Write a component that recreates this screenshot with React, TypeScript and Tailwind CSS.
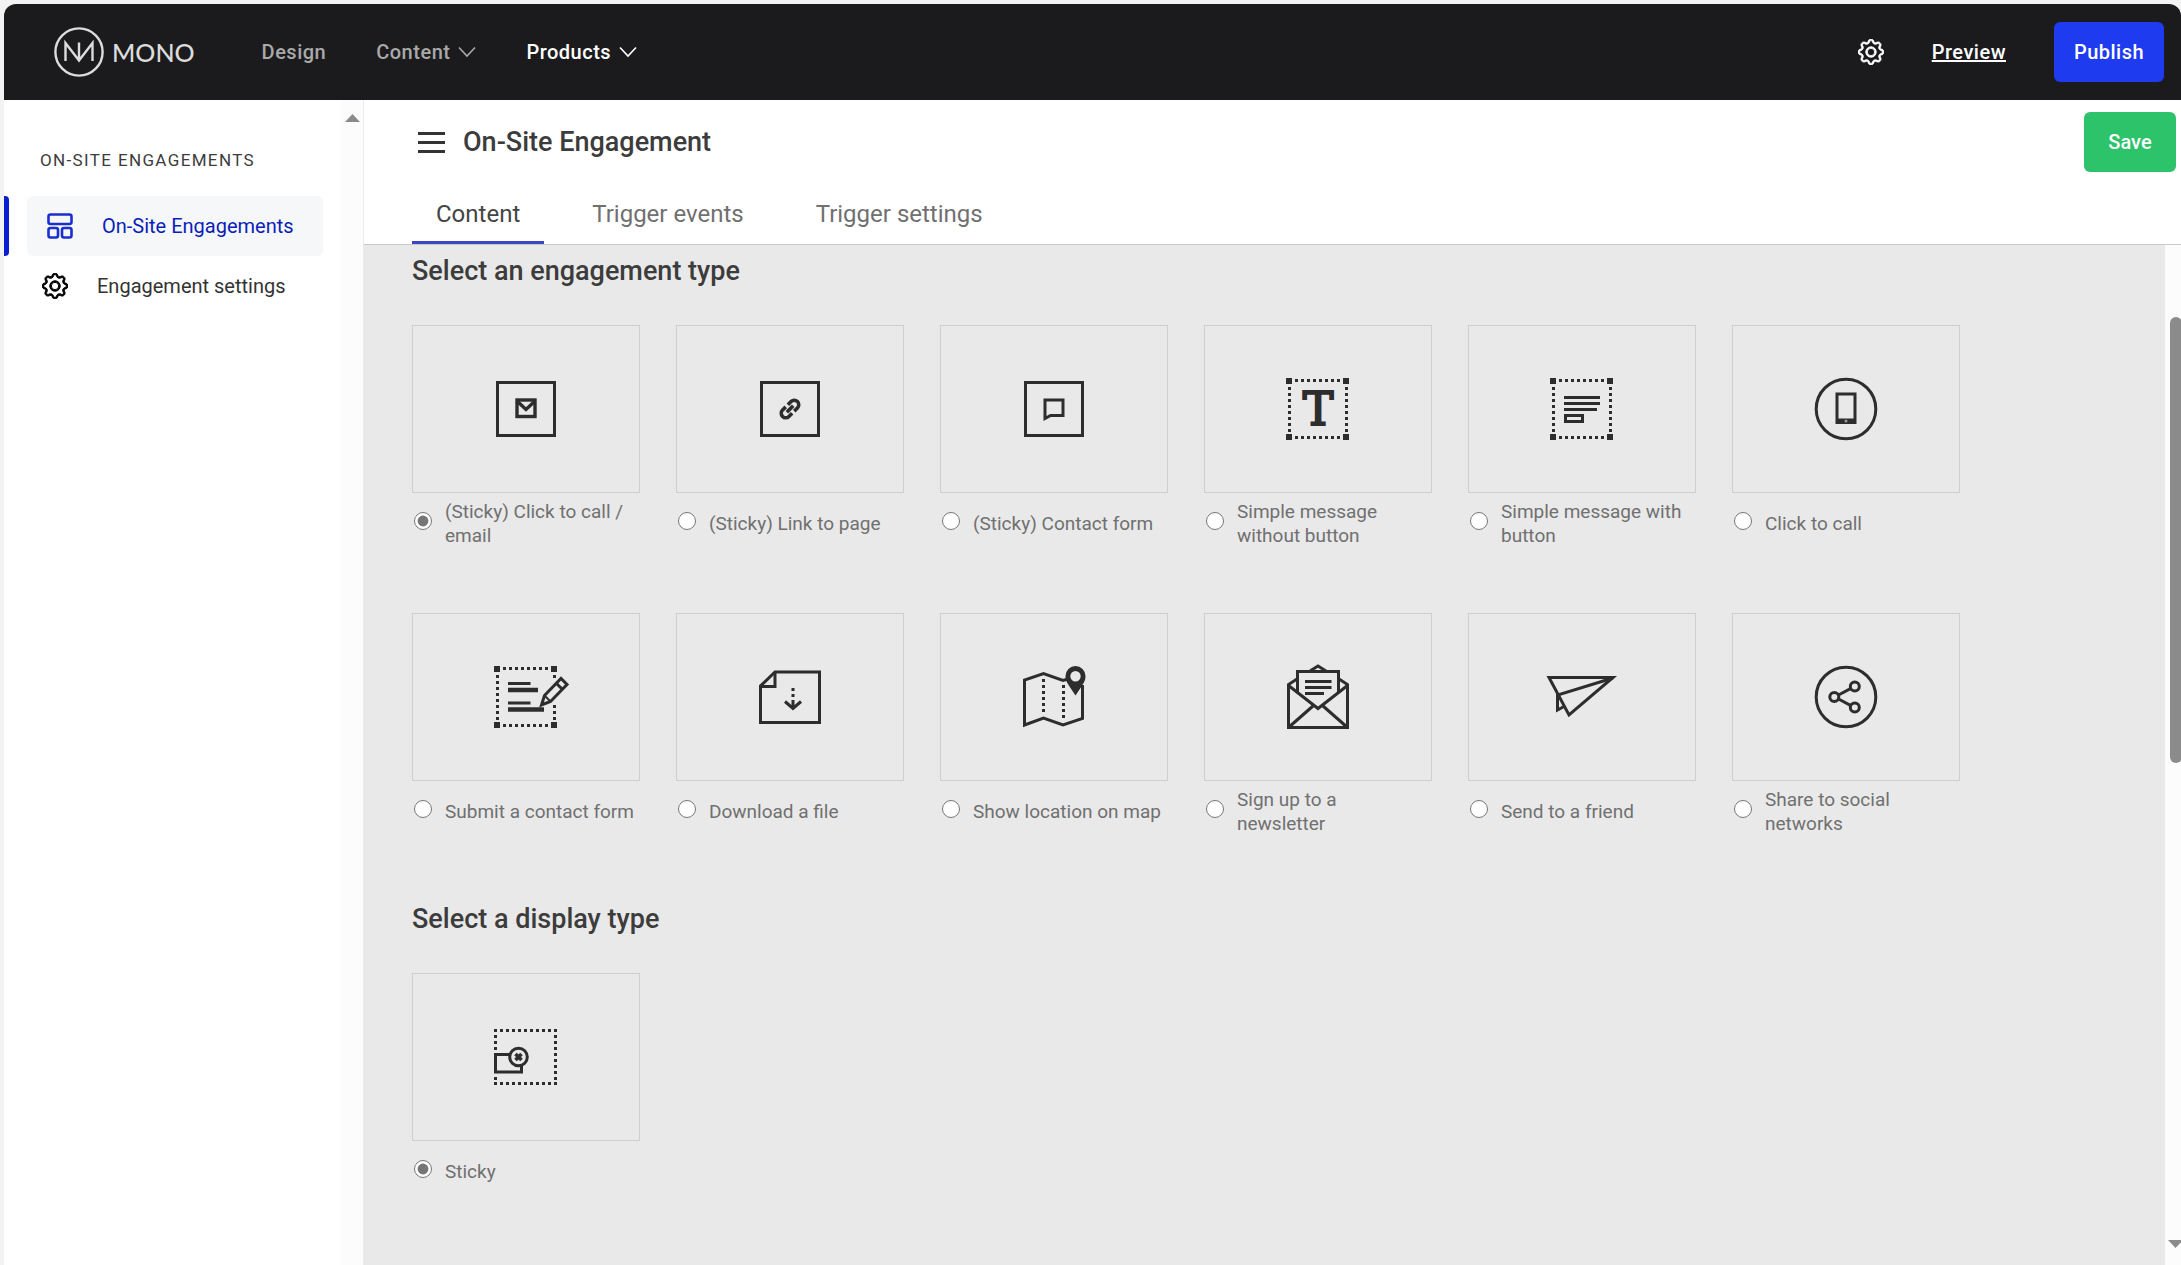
import React, { useState } from 'react';
import { BsGear } from 'react-icons/bs';

interface Option {
  id: string;
  label: string;
  icon: React.ReactNode;
}

interface OptionGroupProps {
  name: string;
  title: string;
  options: Option[];
}

const TABS = ['Content', 'Trigger events', 'Trigger settings'];

// All the card drawings share one canvas with its origin in the middle
const Drawing: React.FC<{ children: React.ReactNode }> = ({ children }) => (
  <svg
    width="96"
    height="96"
    viewBox="-48 -48 96 96"
    fill="none"
    stroke="#2d2d2d"
    strokeWidth="3"
    aria-hidden="true"
  >
    {children}
  </svg>
);

const Frame = () => <rect x="-28.5" y="-26.5" width="57" height="53" />;

const DottedFrame: React.FC<{ cut?: boolean }> = ({ cut }) => (
  <>
    <g strokeDasharray="3 3">
      <path d="M-23 -28.5H22M-23 28.5H22M-28.5 -22V23" />
      {cut ? <path d="M28.5 -22V-18M28.5 8V23" /> : <path d="M28.5 -22V23" />}
    </g>
    <path
      d="M-32 -31h6v6h-6zM25 -31h6v6h-6zM-32 25h6v6h-6zM25 25h6v6h-6z"
      fill="#2d2d2d"
      stroke="none"
    />
  </>
);

const ENGAGEMENT_TYPES: Option[] = [
  {
    id: 'sticky-call',
    label: '(Sticky) Click to call / email',
    icon: (
      <Drawing>
        <Frame />
        <rect x="-9" y="-9" width="18" height="16.5" strokeWidth="3.4" />
        <path d="M-9 -8L0 0.5L9 -8" strokeWidth="3.4" />
      </Drawing>
    ),
  },
  {
    id: 'sticky-link',
    label: '(Sticky) Link to page',
    icon: (
      <Drawing>
        <Frame />
        <g transform="rotate(-45)" strokeWidth="3.6">
          <path d="M-1.5 -4.5H-6a4.5 4.5 0 0 0 0 9H-1.5M1.5 -4.5H6a4.5 4.5 0 0 1 0 9H1.5M-4.5 0H4.5" />
        </g>
      </Drawing>
    ),
  },
  {
    id: 'sticky-form',
    label: '(Sticky) Contact form',
    icon: (
      <Drawing>
        <Frame />
        <path d="M-9 -9H9V6.5H-3.5L-9 9.5Z" />
      </Drawing>
    ),
  },
  {
    id: 'message',
    label: 'Simple message without button',
    icon: (
      <Drawing>
        <DottedFrame />
        <text
          x="0"
          y="16"
          textAnchor="middle"
          fontSize="46"
          fill="#2d2d2d"
          strokeWidth="2"
          className="font-['DejaVu_Serif',serif]"
        >
          T
        </text>
      </Drawing>
    ),
  },
  {
    id: 'message-button',
    label: 'Simple message with button',
    icon: (
      <Drawing>
        <DottedFrame />
        <path d="M-18 -11.5H18M-18 -5.5H18M-18 0.5H15" />
        <rect x="-16.5" y="6.5" width="17" height="6" />
      </Drawing>
    ),
  },
  {
    id: 'call',
    label: 'Click to call',
    icon: (
      <Drawing>
        <circle r="29.8" />
        <path
          d="M-10.5 -16.5h21V15h-21zM-7.5 -13.5V9.5H7.5V-13.5z"
          fill="#2d2d2d"
          fillRule="evenodd"
          stroke="none"
        />
        <circle cy="12" r="1.5" fill="#9a9a9a" stroke="none" />
      </Drawing>
    ),
  },
  {
    id: 'contact-form',
    label: 'Submit a contact form',
    icon: (
      <Drawing>
        <DottedFrame cut />
        <path d="M-18 -13.5H4.5M-18 6H4.5" />
        <path d="M-18 -7H12M-18 12.5H18" strokeWidth="4.5" />
        <path d="M15.5 8L18.5 -1.5L35 -18.5L41 -12.5L24.5 4.5Z" fill="#e9e9e9" />
        <path d="M30 -14L36.5 -7.5" />
        <path d="M18.5 -1.5L21 1L24.5 4.5" strokeWidth="2" />
      </Drawing>
    ),
  },
  {
    id: 'download',
    label: 'Download a file',
    icon: (
      <Drawing>
        <path d="M-15 -25H29.5V25.5H-29.5V-11Z" />
        <path d="M-15 -25V-10.5H-29.5" />
        <path d="M3 -9V0" strokeDasharray="3 3" />
        <path d="M3 3V11M-5 4.5L3 11.5L11 4.5" />
      </Drawing>
    ),
  },
  {
    id: 'map',
    label: 'Show location on map',
    icon: (
      <Drawing>
        <path d="M14 -18L9 -16.5L-10.5 -23.5L-29.5 -17V28L-10.5 21L9 28L28.5 21.5V-12" />
        <path d="M-10.5 -18V17M9.5 -12V24" strokeDasharray="3 3" />
        <path
          d="M21.5 -31a10 10 0 0 1 10 10c0 5 -2 7 -4 10.5l-6 9l-6 -9c-2 -3.5 -4 -5.5 -4 -10.5a10 10 0 0 1 10 -10zM21.5 -26a5.2 5.2 0 1 0 0 10.4a5.2 5.2 0 1 0 0 -10.4z"
          fill="#2d2d2d"
          fillRule="evenodd"
          stroke="none"
        />
      </Drawing>
    ),
  },
  {
    id: 'newsletter',
    label: 'Sign up to a newsletter',
    icon: (
      <Drawing>
        <path d="M-21 -18L-29.5 -12.5V30.5H29.5V-12.5L21 -18" />
        <path d="M-29.5 -11.5L0 11.5L29.5 -11.5" />
        <path d="M-20.5 -4.5V-25.5H20.5V-4.5M-8 -26L0 -31L8 -26" />
        <path d="M-29.5 30.5L-5 9M29.5 30.5L5 9" />
        <path d="M-13 -15.5H13.5M-13 -9.5H13.5M-13 -3.5H6" />
      </Drawing>
    ),
  },
  {
    id: 'friend',
    label: 'Send to a friend',
    icon: (
      <Drawing>
        <path d="M-33 -19.5H31L-13 18Z" />
        <path d="M31 -19L-24.5 -2V13L-18 9.5" />
      </Drawing>
    ),
  },
  {
    id: 'share',
    label: 'Share to social networks',
    icon: (
      <Drawing>
        <circle r="29.8" />
        <circle cx="-11.7" r="4.5" />
        <circle cx="8.8" cy="-10.4" r="4.5" />
        <circle cx="8.8" cy="10.4" r="4.5" />
        <path d="M-7.5 -2L4.5 -8.3M-7.5 2L4.5 8.3" />
      </Drawing>
    ),
  },
];

const DISPLAY_TYPES: Option[] = [
  {
    id: 'sticky',
    label: 'Sticky',
    icon: (
      <Drawing>
        <g strokeDasharray="3 3">
          <path d="M-32 -26.5H31M-32 26.5H31M29.5 -22V23" />
          <path d="M-30.5 -22V-6M-30.5 20V23" />
        </g>
        <rect x="-30.5" y="-2.5" width="26" height="17.5" />
        <circle cx="-7.5" cy="0" r="8.8" fill="#e9e9e9" />
        <path d="M-10.5 -3L-4.5 3M-4.5 -3L-10.5 3" strokeWidth="3.6" />
      </Drawing>
    ),
  },
];

const Chevron = () => (
  <svg width="18" height="12" viewBox="0 0 18 12" fill="none" stroke="currentColor" strokeWidth="1.6" aria-hidden="true">
    <path d="M1 1.5L9 10L17 1.5" />
  </svg>
);

const Logo = () => (
  <a href="#" className="flex items-center gap-2 text-[#dcdcdc]">
    <svg width="50" height="50" viewBox="-25 -25 50 50" fill="none" stroke="currentColor" strokeWidth="2.4" aria-hidden="true">
      <circle r="23.6" />
      <path d="M-13.5 9V-9L0 8.5L13.5 -9V9M0 -9.5V8.5" />
    </svg>
    <span className="font-[Lato,sans-serif] text-[25px] leading-8">MONO</span>
  </a>
);

const OptionGroup: React.FC<OptionGroupProps> = ({ name, title, options }) => {
  const [selected, setSelected] = useState(options[0].id);

  return (
    <fieldset className="min-w-0">
      <legend className="mb-9 text-[27px] font-medium leading-9 text-[#3c3c3c]">{title}</legend>
      <div className="flex flex-wrap gap-x-9 gap-y-[65px]">
        {options.map((option) => (
          <label key={option.id} className="w-[228px] cursor-pointer">
            <div className="flex h-[168px] items-center justify-center border border-[#cfcfcf]">
              {option.icon}
            </div>
            <div className="mt-[7px] flex h-12 items-center pl-0.5 pr-1">
              <input
                type="radio"
                name={name}
                checked={selected === option.id}
                onChange={() => setSelected(option.id)}
                className="mb-1.5 mr-[13px] size-[18px] shrink-0 accent-[#767676]"
              />
              <span className="text-[19px] leading-6 text-[#707070]">{option.label}</span>
            </div>
          </label>
        ))}
      </div>
    </fieldset>
  );
};

const App: React.FC = () => {
  const [activeTab, setActiveTab] = useState('Content');

  return (
    <div className="flex min-h-screen flex-col overflow-hidden bg-[#f3f3f3] pl-1 pt-1 font-[Roboto,sans-serif]">
      <header className="flex h-24 items-center justify-between rounded-t-xl bg-[#1b1b1d] pl-[50px] pr-[17px] text-xl font-medium">
        <div className="flex items-center">
          <Logo />
          <nav className="ml-[67px] flex items-center gap-[50px] tracking-wide text-[#a9a9a9]">
            <a href="#">Design</a>
            <button type="button" className="flex items-center gap-2">
              Content
              <Chevron />
            </button>
            <button type="button" className="flex items-center gap-2 text-white">
              Products
              <Chevron />
            </button>
          </nav>
        </div>
        <div className="flex items-center gap-12 tracking-wide text-white">
          <button type="button" aria-label="Settings">
            <BsGear size={26} stroke="currentColor" strokeWidth={0.5} />
          </button>
          <a href="#" className="underline">
            Preview
          </a>
          <button type="button" className="h-[60px] w-[110px] rounded-md bg-[#1f3bf0] tracking-wide">
            Publish
          </button>
        </div>
      </header>

      <div className="flex grow">
        <aside className="flex w-[360px] shrink-0 bg-white">
          <nav className="grow pt-[46px]">
            <h2 className="pl-9 text-[17px] leading-7 tracking-[0.08em] text-[#3c3c3c]">
              ON-SITE ENGAGEMENTS
            </h2>
            <div className="mt-[22px] flex">
              <span className="w-[5px] rounded-r bg-[#0b1fd0]" />
              <a
                href="#"
                className="ml-[18px] mr-[19px] flex h-[60px] grow items-center gap-[29px] rounded-md bg-[#f5f7f9] pl-5 text-xl text-[#0b1fb8]"
              >
                <svg width="26" height="26" viewBox="0 0 26 26" fill="none" stroke="#1a2fd0" strokeWidth="2.6" aria-hidden="true">
                  <rect x="1.5" y="1.5" width="23" height="9.5" rx="2" />
                  <rect x="1.5" y="15" width="9.5" height="9.5" rx="2" />
                  <rect x="15" y="15" width="9.5" height="9.5" rx="2" />
                </svg>
                On-Site Engagements
              </a>
            </div>
            <a href="#" className="flex h-[60px] items-center gap-[29px] pl-[38px] text-xl text-[#333]">
              <BsGear size={26} color="#000" stroke="#000" strokeWidth={0.6} />
              Engagement settings
            </a>
          </nav>
          <div className="flex w-[22px] justify-center border-r border-[#ebebeb] bg-[#fcfcfc] pt-[14px]">
            <svg width="15" height="8" viewBox="0 0 15 8" fill="#8b8b8b" aria-hidden="true">
              <path d="M7.5 0L15 8H0z" />
            </svg>
          </div>
        </aside>

        <main className="flex min-w-0 grow flex-col">
          <div className="flex h-[145px] flex-col justify-between border-b border-[#c8c8c8] bg-white pl-12 pr-[5px] pt-3">
            <div className="flex items-start justify-between">
              <div className="flex items-center gap-[18px] pl-1.5 pt-3">
                <button type="button" aria-label="Menu">
                  <svg width="27" height="21" viewBox="0 0 27 21" stroke="#333" strokeWidth="3" aria-hidden="true">
                    <path d="M0 1.5H27M0 10.5H27M0 19.5H27" />
                  </svg>
                </button>
                <h1 className="text-[27px] font-medium leading-9 text-[#3c3c3c]">On-Site Engagement</h1>
              </div>
              <button type="button" className="h-[60px] w-[92px] rounded-md bg-[#2cc36b] text-xl font-medium text-white">
                Save
              </button>
            </div>
            <div role="tablist" className="flex gap-6">
              {TABS.map((tab) => (
                <button
                  key={tab}
                  type="button"
                  role="tab"
                  aria-selected={tab === activeTab}
                  onClick={() => setActiveTab(tab)}
                  className={`border-b-3 px-6 pb-[11px] pt-2 text-2xl ${
                    tab === activeTab ? 'border-[#3b46c4] text-[#444]' : 'border-transparent text-[#707070]'
                  }`}
                >
                  {tab}
                </button>
              ))}
            </div>
          </div>

          <div className="flex grow">
            <form className="flex grow flex-col gap-[65px] bg-[#e9e9e9] pb-16 pl-12 pr-8 pt-2">
              <div className="max-w-[1560px]">
                <OptionGroup name="engagement-type" title="Select an engagement type" options={ENGAGEMENT_TYPES} />
              </div>
              <OptionGroup name="display-type" title="Select a display type" options={DISPLAY_TYPES} />
            </form>
            <div className="flex w-4 shrink-0 flex-col items-center justify-between bg-[#fcfcfc] pb-[17px] pl-[5px] pt-[72px]">
              <span className="h-[446px] w-3 rounded-full bg-[#8b8b8b]" />
              <svg width="15" height="8" viewBox="0 0 15 8" fill="#8b8b8b" className="shrink-0" aria-hidden="true">
                <path d="M0 0H15L7.5 8z" />
              </svg>
            </div>
          </div>
        </main>
      </div>
    </div>
  );
};

export default App;
